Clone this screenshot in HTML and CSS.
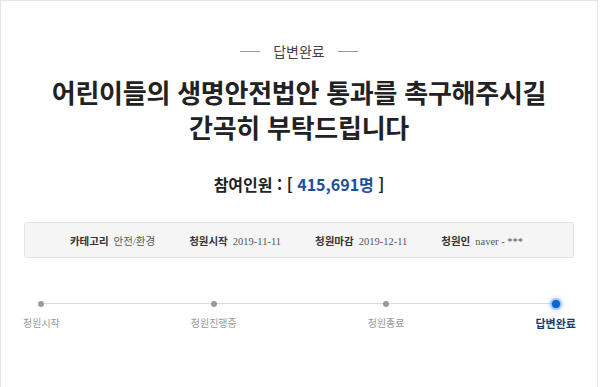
FILE: index.html
```html
<!DOCTYPE html>
<html lang="ko">
  <head>
    <meta charset="utf-8" />
    <title>청원 상세</title>
    <link rel="stylesheet" href="styles.css">
  </head>
  <body>
    <div class="petition-view">
      <div class="petition-status">
        <span class="petition-status-rule"></span>
        <span class="petition-status-text">답변완료</span>
        <span class="petition-status-rule"></span>
      </div>
      <h1 class="petition-title">어린이들의 생명안전법안 통과를 촉구해주시길<br>간곡히 부탁드립니다</h1>
      <h2 class="petition-count">참여인원 : [ <span class="petition-count-num">415,691명</span> ]</h2>
      <ul class="petition-info">
        <li><b>카테고리</b>안전/환경</li>
        <li><b>청원시작</b>2019-11-11</li>
        <li><b>청원마감</b>2019-12-11</li>
        <li><b>청원인</b>naver - ***</li>
      </ul>
      <ol class="petition-steps">
        <li class="petition-step"><span class="petition-step-dot"></span><span class="petition-step-label">청원시작</span></li>
        <li class="petition-step"><span class="petition-step-dot"></span><span class="petition-step-label">청원진행중</span></li>
        <li class="petition-step"><span class="petition-step-dot"></span><span class="petition-step-label">청원종료</span></li>
        <li class="petition-step active"><span class="petition-step-dot"></span><span class="petition-step-label">답변완료</span></li>
      </ol>
    </div>
  </body>
</html>
```

FILE: styles.css
```css
:root {
    --frame-border: #e6e6e6;
    --text-dark: #222;
    --text-mid: #444;
    --text-light: #999;
    --blue-count: #1d4f9a;
    --blue-step: #0a64d2;
    --blue-step-label: #173a73;
}
html, body {
    margin: 0;
    padding: 0;
    background: #fff;
    color: var(--text-dark);
    font-family: "Noto Sans CJK KR", "Noto Sans", sans-serif;
}

.petition-view {
    box-sizing: border-box;
    width: 598px;
    height: 387px;
    border: 1px solid var(--frame-border);
    border-bottom: none;
    display: flex;
    flex-direction: column;
    align-items: stretch;
}

.petition-status {
    display: flex;
    justify-content: center;
    align-items: center;
    gap: 13px;
    margin-top: 40px;
    height: 20px;
}
.petition-status-rule {
    width: 20px;
    height: 1px;
    background: #999;
}
.petition-status-text {
    font-size: 14px;
    line-height: 20px;
    color: var(--text-mid);
}

.petition-title {
    margin: 13px 0 0;
    text-align: center;
    font-size: 26px;
    letter-spacing: -0.25px;
    line-height: 35px;
    font-weight: bold;
    color: var(--text-dark);
}

.petition-count {
    margin: 28px 0 0;
    text-align: center;
    font-size: 16px;
    line-height: 24px;
    font-weight: bold;
    color: var(--text-dark);
}
.petition-count-num {
    color: var(--blue-count);
}

.petition-info {
    list-style: none;
    margin: 26px 23px 0 23px;
    padding: 0 5px 0 0;
    height: 36px;
    box-sizing: border-box;
    border: 1px solid #e4e4e4;
    border-radius: 3px;
    background: #f5f5f5;
    display: flex;
    justify-content: center;
    align-items: center;
    gap: 34px;
    font-family: "Liberation Serif", "Noto Sans CJK KR", serif;
    font-size: 10.5px;
    color: #555;
}
.petition-info b {
    font-family: "Noto Sans CJK KR", sans-serif;
    font-size: 10.5px;
    color: #333;
    margin-right: 5px;
}

.petition-steps {
    position: relative;
    list-style: none;
    margin: 43px 0 0;
    padding: 0 21px 0 22px;
    display: flex;
    justify-content: space-between;
}
.petition-steps::before {
    content: "";
    position: absolute;
    top: 2px;
    left: 41px;
    right: 40px;
    height: 1px;
    background: #dcdcdc;
}
.petition-step {
    position: relative;
    display: flex;
    flex-direction: column;
    align-items: center;
}
.petition-step-dot {
    width: 6px;
    height: 6px;
    border-radius: 50%;
    background: #9a9a9a;
}
.petition-step-label {
    margin-top: 9px;
    font-size: 10px;
    line-height: 14px;
    color: var(--text-light);
}
.petition-step.active .petition-step-dot {
    width: 8px;
    height: 8px;
    margin: -1px 0;
    background: var(--blue-step);
    box-shadow: 0 0 0 2px rgba(10, 100, 210, 0.25), 0 0 4px 3px rgba(10, 100, 210, 0.2);
}
.petition-step.active .petition-step-label {
    font-size: 11px;
    font-weight: bold;
    color: var(--blue-step-label);
}
```
